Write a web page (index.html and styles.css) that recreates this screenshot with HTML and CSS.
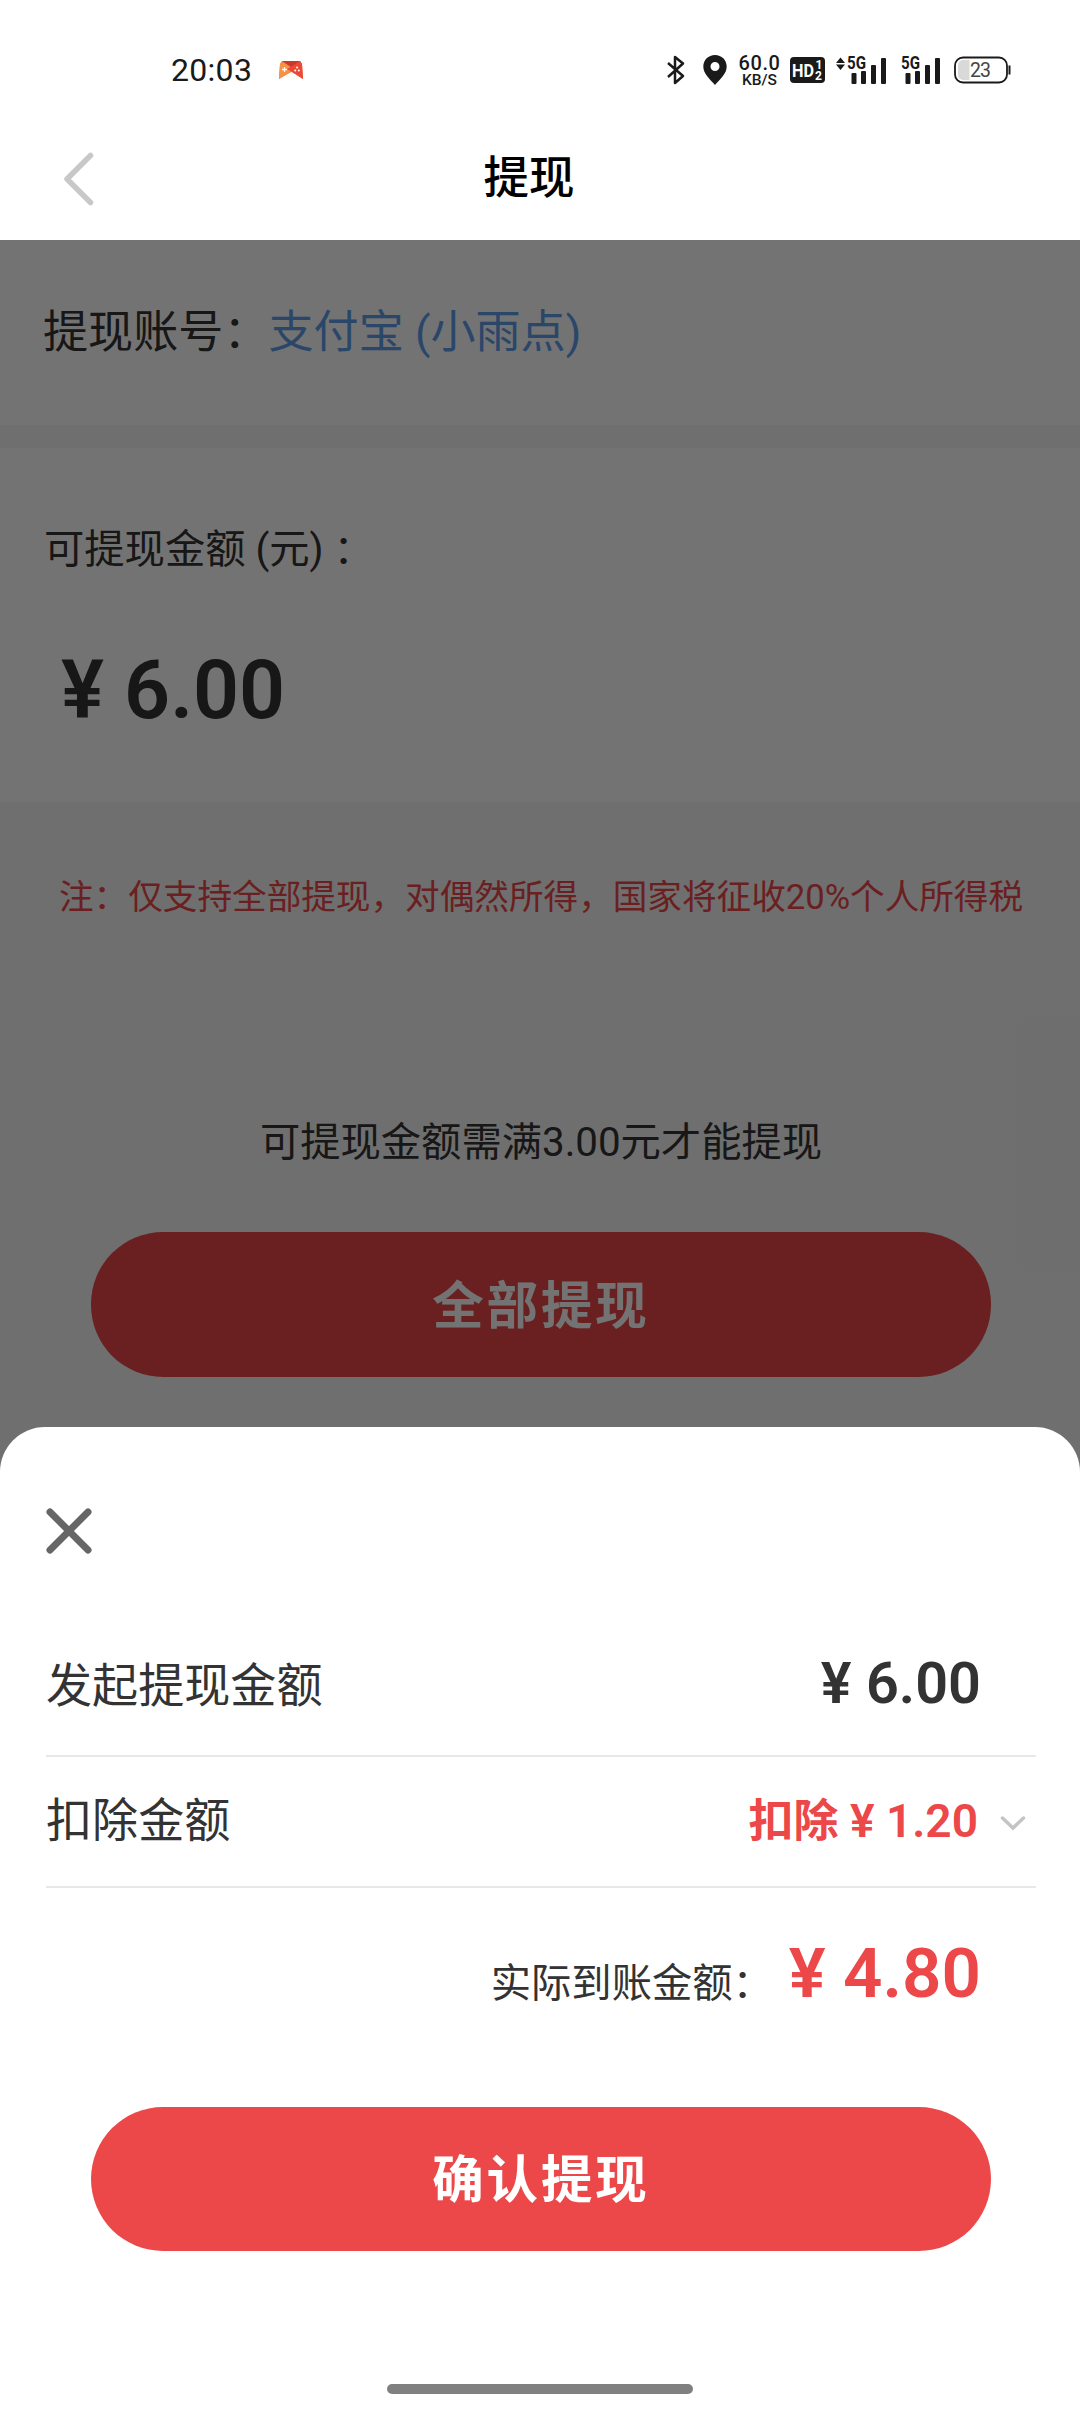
FILE: index.html
```html
<!DOCTYPE html>
<html lang="zh-CN">
<head>
<meta charset="utf-8">
<title>提现</title>
<link rel="stylesheet" href="styles.css">
</head>
<body>
<div class="screen">
  <header class="status">
    <span class="clock">20:03</span>
    <svg class="game" width="24" height="18" viewBox="0 0 24 18">
      <path d="M3 0H21L23 3 24 18 12 10 0 18 1 3Z" fill="#f4683c"/>
      <path d="M3 0 16 9 0 18 1 3Z" fill="#f59245"/>
      <path d="M21 0 8 8 24 18 23 3Z" fill="#ea4a35"/>
      <path d="M3 0H21L12 6Z" fill="#c9392b"/>
      <path d="M5.500 6v5M3 8.500h5" stroke="#fff" stroke-width="1.300"/>
      <circle cx="18" cy="6.500" r="1" fill="#fff"/><circle cx="16.200" cy="9.500" r="1" fill="#fff"/><circle cx="19.800" cy="9.500" r="1" fill="#fff"/>
    </svg>
    <div class="indicators">
      <svg class="bt" width="20" height="30" viewBox="0 0 20 30"><path d="M2 8 17 21 9 28V2L17 8.500 2 22" fill="none" stroke="#1a1a1a" stroke-width="2.500" stroke-linejoin="round"/></svg>
      <svg class="pin" width="24" height="30" viewBox="0 0 24 30"><path fill-rule="evenodd" d="M12 0C5.400 0 .3 5 .3 11.500.3 19 7 24 12 30 17 24 23.700 19 23.700 11.500 23.700 5 18.600 0 12 0ZM12 7a4.500 4.500 0 1 1 0 9 4.500 4.500 0 0 1 0-9Z" fill="#1a1a1a"/></svg>
      <div class="speed"><span class="rate">60.0</span><span class="unit">KB/S</span></div>
      <svg class="hd" width="35" height="26" viewBox="0 0 35 26"><rect width="35" height="26" rx="4" fill="#1a1a1a"/><text class="hd-main" x="2" y="20" textLength="22" lengthAdjust="spacingAndGlyphs">HD</text><text class="hd-sub" x="25.500" y="12">1</text><text class="hd-sub" x="25" y="23">2</text></svg>
      <svg class="sig-a" width="51" height="42" viewBox="0 -7 51 42" fill="#1a1a1a"><path d="M4.500 1.500 9 7H0ZM4.500 14 0 8.500H9Z"/><text class="net" x="11" y="13" textLength="19" lengthAdjust="spacingAndGlyphs">5G</text><rect x="15.500" y="17" width="5" height="11" rx="1"/><rect x="25" y="15" width="5" height="13" rx="1"/><rect x="35" y="9" width="5" height="19" rx="1"/><rect x="45" y="2" width="5" height="26" rx="1"/></svg>
      <svg class="sig-b" width="40" height="42" viewBox="0 -7 40 42" fill="#1a1a1a"><text class="net" x="0" y="13" textLength="19" lengthAdjust="spacingAndGlyphs">5G</text><rect x="4.500" y="17" width="5" height="11" rx="1"/><rect x="14" y="15" width="5" height="13" rx="1"/><rect x="24" y="9" width="5" height="19" rx="1"/><rect x="34" y="2" width="5" height="26" rx="1"/></svg>
      <svg class="battery" width="57" height="28" viewBox="0 0 57 28"><rect x="1" y="1.500" width="52" height="25" rx="8" fill="#fff" stroke="#1a1a1a" stroke-width="1.800"/><path d="M9 4H15.500V24H9A5 5 0 0 1 4 19V9A5 5 0 0 1 9 4Z" fill="#d9d9d9"/><path d="M55.500 9.500V18.500" stroke="#1a1a1a" stroke-width="2"/><text class="level" x="16" y="21" textLength="21">23</text></svg>
    </div>
  </header>
  <nav class="nav">
    <svg class="back" width="34" height="56" viewBox="0 0 34 56"><path d="M28.500 4.500 5 28 28.500 51.500" fill="none" stroke="#c8c8c8" stroke-width="5.500" stroke-linecap="round" stroke-linejoin="round"/></svg>
    <h1 class="title">提现</h1>
  </nav>

  <main class="page">
    <section class="account"><span>提现账号：</span><span class="account-name">支付宝 (小雨点)</span></section>
    <section class="balance">
      <p class="balance-label">可提现金额 (元) ：</p>
      <p class="balance-value">¥ 6.00</p>
    </section>
    <p class="note">注：仅支持全部提现，对偶然所得，国家将征收20%个人所得税</p>
    <p class="tip">可提现金额需满3.00元才能提现</p>
    <button class="button">全部提现</button>
    <div class="mask"></div>
  </main>

  <section class="sheet">
    <svg class="close" width="48" height="48" viewBox="0 0 48 48"><path d="M5 5 43 43M43 5 5 43" stroke="#666" stroke-width="7" stroke-linecap="round"/></svg>
    <div class="row row-amount"><span>发起提现金额</span><span class="amount">¥ 6.00</span></div>
    <div class="row row-deduct"><span>扣除金额</span><span class="deduct"><span class="deduct-word">扣除</span> ¥ 1.20</span>
      <svg class="chevron" width="26" height="17" viewBox="0 0 26 17"><path d="M2.500 3 13 13 23.500 3" fill="none" stroke="#c4c4c4" stroke-width="3.500" stroke-linecap="round"/></svg>
    </div>
    <div class="net-row"><span class="net-label">实际到账金额：</span><span class="net-value">¥ 4.80</span></div>
    <button class="button">确认提现</button>
    <div class="home"></div>
  </section>
</div>
</body>
</html>
```
FILE: styles.css
```css
* { box-sizing: border-box; }
body, h1, p { margin: 0; }
body { font-family: Roboto, "Noto Sans CJK SC", sans-serif; color: #333; background: #fff; }
svg { display: block; flex: none; }

.screen { position: relative; width: 1080px; height: 2412px; overflow: hidden; display: flex; flex-direction: column; }

.status { height: 115px; padding: 25px 69px 0 171px; display: flex; align-items: center; color: #1a1a1a; }
.clock { width: 108px; font-size: 32px; line-height: 40px; letter-spacing: .3px; }
.indicators { margin-left: auto; display: flex; align-items: center; }
.bt { margin-right: 1px; }
.pin { margin-left: 16px; }
.speed { width: 41px; margin-left: 12px; padding-top: 1px; display: flex; flex-direction: column; align-items: center; font-weight: 500; }
.rate { font-size: 20px; line-height: 18px; letter-spacing: .6px; }
.unit { font-size: 15.5px; line-height: 16px; }
.hd { margin-left: 10px; }
.hd-main { font-size: 19px; font-weight: 700; fill: #fff; }
.hd-sub { font-size: 12px; font-weight: 700; fill: #fff; }
.sig-a { margin-left: 11px; }
.sig-b { margin-left: 14px; }
.net { font-size: 19px; font-weight: 700; }
.battery { margin-left: 13px; }
.level { font-size: 19.5px; fill: #444; }

.nav { height: 125px; padding: 3px 84px 0 62px; display: grid; grid-template-columns: 34px 1fr 34px; align-items: center; }
.title { font-size: 45.5px; line-height: 60px; font-weight: 500; text-align: center; color: #000; }

.page { position: relative; flex: 1; background: #f5f5f5; display: flex; flex-direction: column; }
.mask { position: absolute; inset: 0; background: rgba(0, 0, 0, .55); }
.account { height: 185px; padding: 0 43px 8px; display: flex; align-items: center; background: #fff; font-size: 45.1px; }
.account-name { color: #5d9deb; }
.balance { height: 354px; margin-top: 23px; padding: 72px 44px 0; background: #fff; }
.balance-label { font-size: 40.3px; line-height: 60px; }
.balance-value { margin: 63px 0 0 17px; font-size: 80.64px; line-height: 96px; font-weight: 600; }
.note { margin: 65px 0 0 59px; font-size: 34.62px; line-height: 60px; color: #ec4849; white-space: nowrap; }
.tip { margin: 186px 0 0 2px; font-size: 40.3px; line-height: 60px; text-align: center; }
.button { width: 900px; height: 144px; margin: 0 45px; padding: 4px 0 0; border: 0; border-radius: 72px; background: #ec4849; color: #fff; font: 700 51.5px/140px Roboto, "Noto Sans CJK SC", sans-serif; letter-spacing: 2.88px; text-align: center; flex: none; }
.tip + .button { margin: 59px 91px 0; height: 145px; padding-top: 5px; }

.sheet { position: absolute; left: 0; right: 0; bottom: 0; height: 985px; padding: 80px 44px 18px 46px; border-radius: 45px 45px 0 0; background: #fff; display: flex; flex-direction: column; }
.close { margin-left: -1px; }
.row { display: flex; align-items: center; font-size: 46.08px; border-bottom: 2px solid #e8e8e8; }
.row-amount { height: 146px; margin-top: 56px; padding: 0 55px 2px 0; }
.row-deduct { height: 131px; padding: 0 10px 9px 0; }
.amount { margin-left: auto; padding-top: 2px; font-size: 57.6px; font-weight: 600; }
.deduct { margin-left: auto; font-weight: 600; color: #ec4849; }
.deduct-word { font-size: 45px; font-weight: 700; }
.chevron { margin: 13px 0 0 22px; }
.net-row { height: 219px; padding: 45px 55px 0 0; display: flex; justify-content: flex-end; align-items: baseline; }
.net-label { font-size: 40.3px; }
.net-value { margin-left: 16px; font-size: 69.12px; font-weight: 600; color: #ec4849; }
.home { width: 306px; height: 10px; margin: auto 0 0 341px; border-radius: 5px; background: #808080; }
```
